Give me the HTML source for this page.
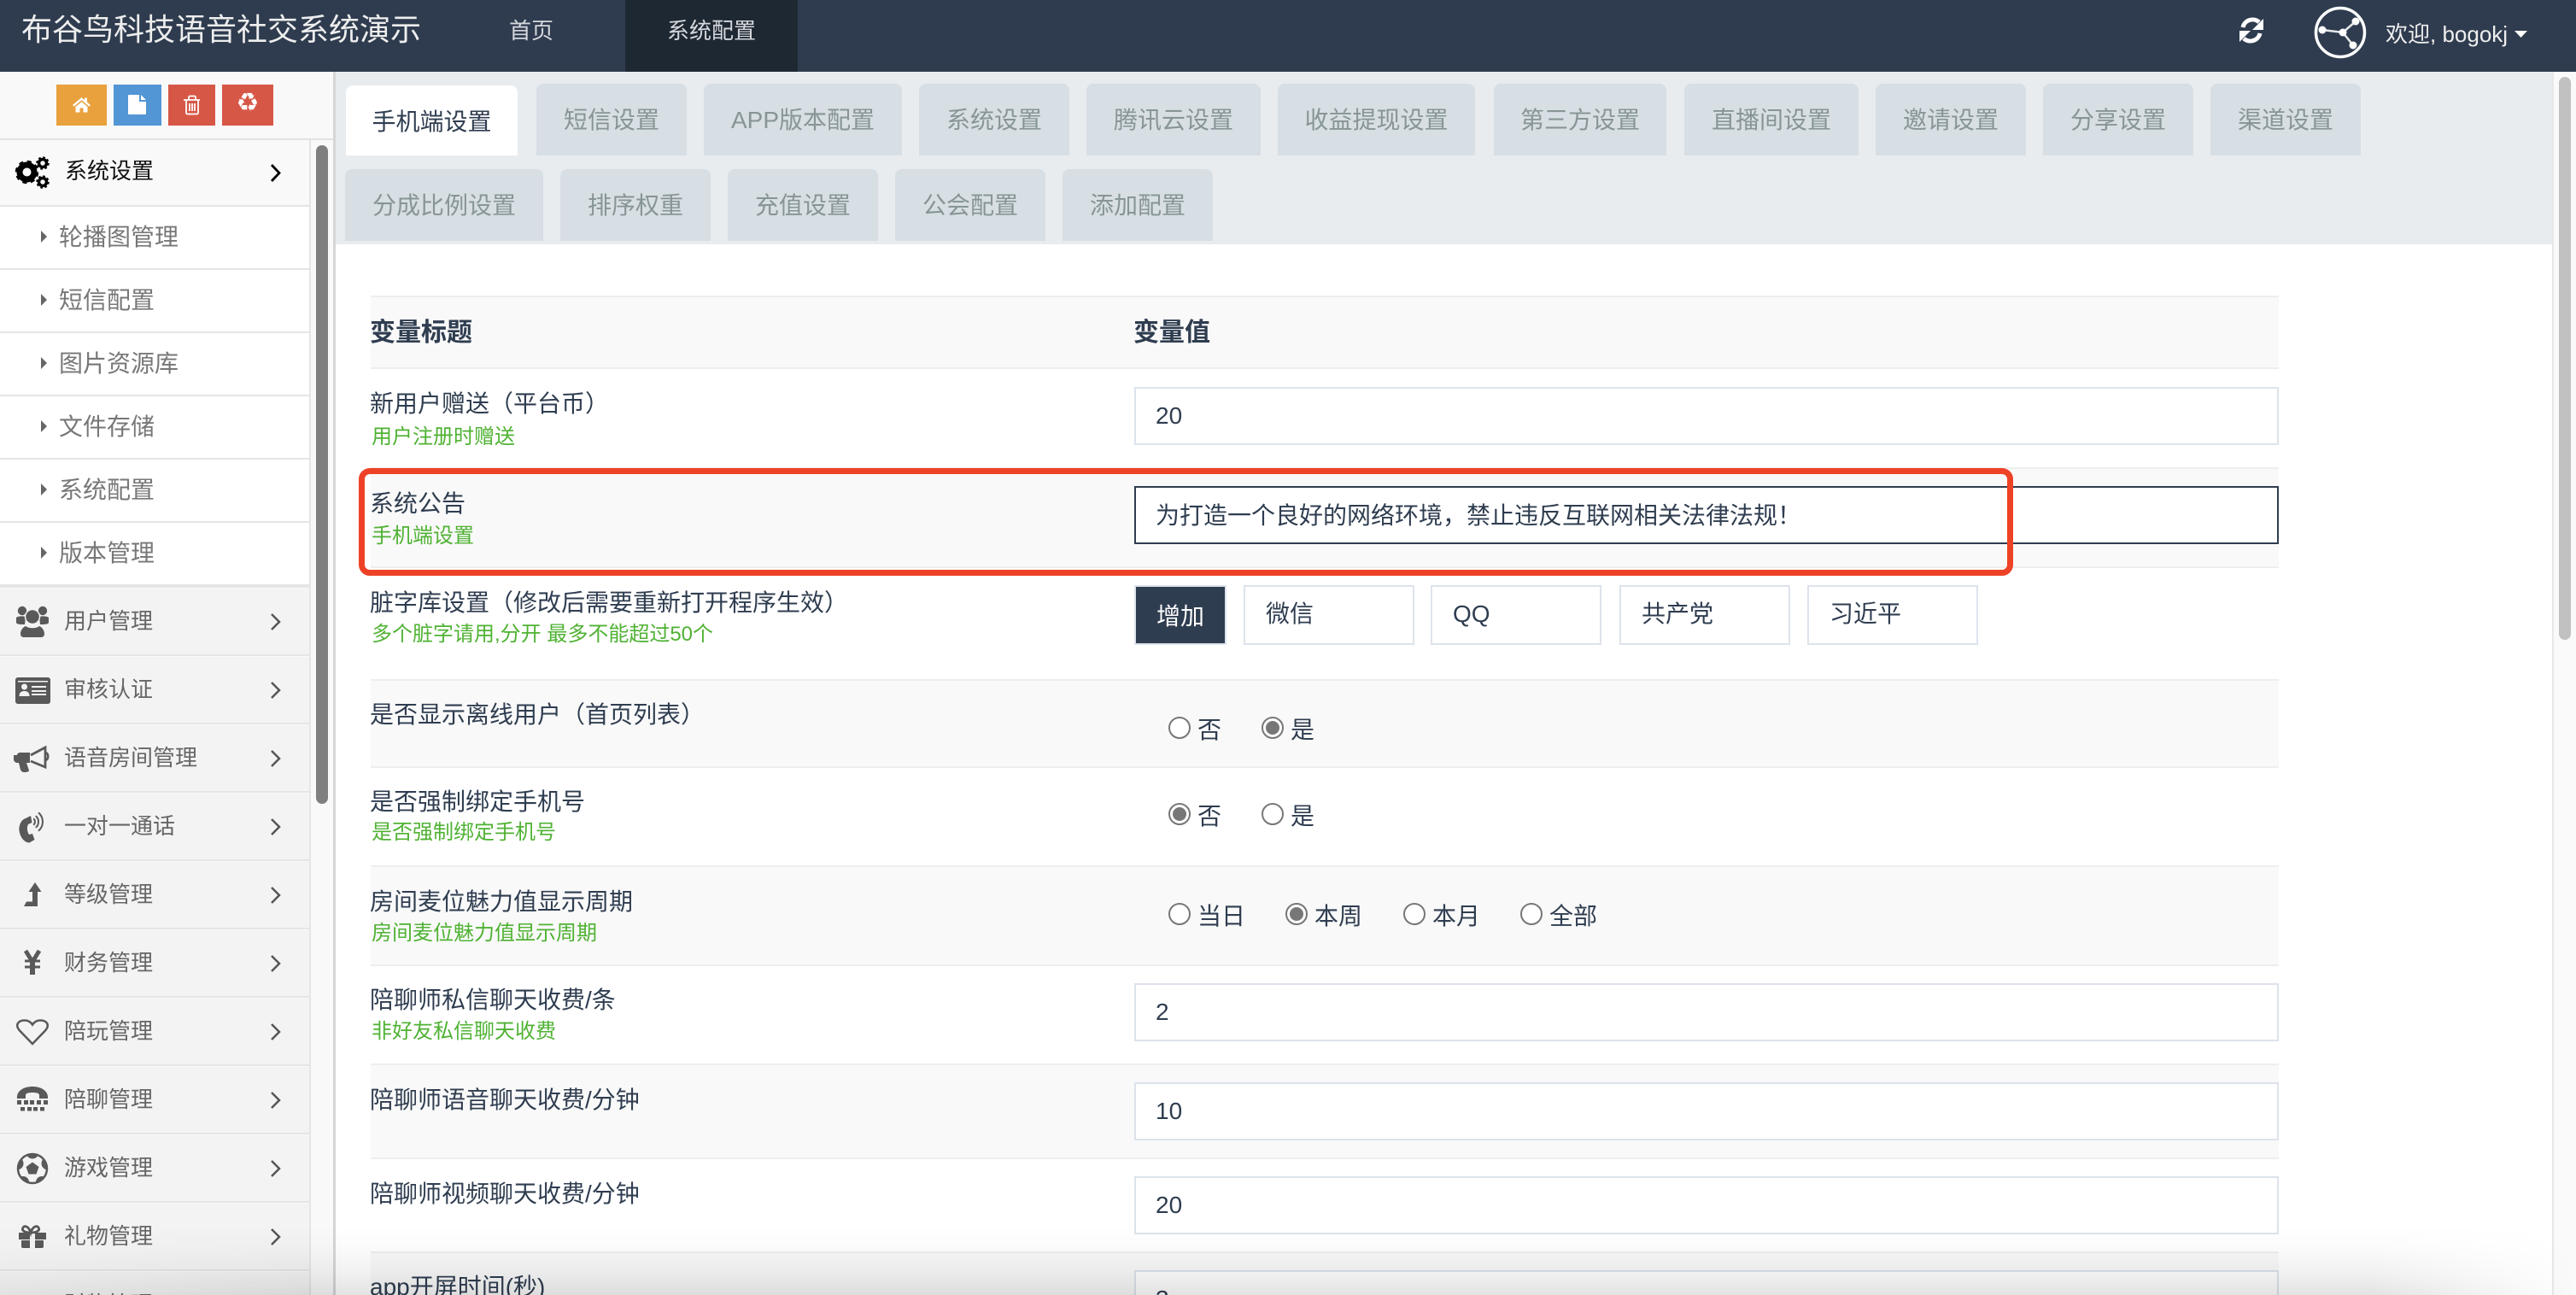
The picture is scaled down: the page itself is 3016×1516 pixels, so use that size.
<!DOCTYPE html>
<html lang="zh"><head><meta charset="utf-8"><title>系统配置</title>
<style>
*{box-sizing:border-box;margin:0;padding:0}
html,body{width:3016px;height:1516px;overflow:hidden;background:#fff}
body{position:relative;font-family:"Liberation Sans","Noto Sans CJK SC",sans-serif;color:#2f3d50;font-size:28px}
.a{position:absolute}
.t{position:absolute;white-space:nowrap;line-height:40px;height:40px}
.tab{position:absolute;height:84px;background:#d7dee4;color:#879595;border-radius:8px 8px 0 0;display:flex;align-items:center;justify-content:center;font-size:28px;padding-bottom:3px}
.row{position:absolute;left:434px;width:2234px;border-top:2px solid #eee}
.z{background:#f9f9f9}
.l{position:absolute;left:433px;white-space:nowrap;font-size:28px;line-height:40px;height:40px;color:#2f3d50;margin-top:2px}
.g{position:absolute;left:435px;white-space:nowrap;font-size:24px;line-height:30px;height:30px;color:#4fb233;margin-top:2px}
.in{position:absolute;left:1328px;width:1340px;height:68px;background:#fff;border:2px solid #dde3ec;line-height:64px;padding-left:23px;font-size:28px;white-space:nowrap;overflow:hidden}
.wd{position:absolute;top:685px;height:70px;width:200px;background:#fff;border:2px solid #dde3ec;line-height:64px;padding-left:24px;font-size:28px}
.rd{position:absolute;width:26px;height:26px;border-radius:50%;border:2px solid #777;background:#fff}
.rd.c::after{content:"";position:absolute;left:3px;top:3px;width:16px;height:16px;border-radius:50%;background:#777}
.m{position:absolute;left:0;width:362px;height:78px;background:#f3f3f3;border-top:1px solid #fafafa}
.m span{position:absolute;left:75px;top:18px;font-size:26px;line-height:40px;color:#666;white-space:nowrap}
.s{position:absolute;left:0;width:362px;height:72px;background:#fff}
.s span{position:absolute;left:69px;top:16px;font-size:28px;line-height:40px;color:#777;white-space:nowrap}
.s i{position:absolute;left:48px;top:28px;border-left:7px solid #666;border-top:7px solid transparent;border-bottom:7px solid transparent}
.ln{position:absolute;left:0;width:362px;height:2px;background:#e5e5e5}
.shade{position:absolute;left:0;top:1436px;width:3016px;height:80px;background:linear-gradient(to bottom,rgba(0,0,0,0),rgba(0,0,0,.015) 30%,rgba(0,0,0,.06) 70%,rgba(0,0,0,.11));-webkit-mask-image:linear-gradient(to right,rgba(0,0,0,.6),#000 12%,#000 92%,transparent);mask-image:linear-gradient(to right,rgba(0,0,0,.6),#000 12%,#000 92%,transparent)}
</style></head><body>

<!-- header -->
<div class="a" style="left:0;top:0;width:3016px;height:84px;background:#2f3c4f"></div>
<div class="a" style="left:732px;top:0;width:202px;height:84px;background:#1e2833"></div>
<div class="t" style="left:25px;top:15px;font-size:36px;line-height:40px;color:#eee">布谷鸟科技语音社交系统演示</div>
<div class="t" style="left:596px;top:16px;font-size:26px;color:#d5d8dc">首页</div>
<div class="t" style="left:781px;top:16px;font-size:26px;color:#d5d8dc">系统配置</div>
<svg class="a" style="left:2600px;top:0" width="416" height="84" viewBox="2600 0 416 84">
 <g fill="none" stroke="#fff" stroke-width="5"><path d="M2626 32a11.500 11.500 0 0 1 19-6"/><path d="M2646 39a11.500 11.500 0 0 1-19 6"/></g>
 <path d="M2650 22v13h-13z" fill="#fff"/><path d="M2622 49v-13h13z" fill="#fff"/>
 <circle cx="2740" cy="38" r="28.500" fill="#2f3c4f" stroke="#fff" stroke-width="3.500"/>
 <g stroke="#e8eaec" stroke-width="2.500" fill="none"><path d="M2719 35l24 3 15-13M2743 38l12 15"/></g>
 <g fill="#fff"><circle cx="2719" cy="35" r="4.500"/><circle cx="2743" cy="38" r="4.500"/><circle cx="2758" cy="25" r="4.500"/><circle cx="2755" cy="53" r="4.500"/></g>
 <path d="M2944 36h15l-7.500 8z" fill="#fff"/>
</svg>
<div class="t" style="left:2793px;top:20px;font-size:26px;color:#eee">欢迎, bogokj</div>

<!-- sidebar -->
<div class="a" style="left:0;top:84px;width:390px;height:1432px;background:#f9f9f9"></div>
<div class="a" style="left:390px;top:84px;width:3px;height:1432px;background:#d5d6d8"></div>
<div class="a" style="left:66px;top:99px;width:59px;height:48px;background:#e8a13c"></div>
<div class="a" style="left:133px;top:99px;width:56px;height:48px;background:#5296d5"></div>
<div class="a" style="left:197px;top:99px;width:55px;height:48px;background:#d75747"></div>
<div class="a" style="left:260px;top:99px;width:60px;height:48px;background:#d75747"></div>
<svg class="a" style="left:60px;top:99px" width="270" height="48" viewBox="60 99 270 48">
 <path d="M95.500 114l-10.500 9 1.500 1.800 9-7.600 9 7.600 1.500-1.800-4-3.400v-5h-3v2.500z" fill="#fff"/>
 <path d="M88.500 125l7-5.800 7 5.800v6.500h-5v-5h-4v5h-5z" fill="#fff"/>
 <path d="M150 112a1 1 0 0 1 1-1h12v8h8v14a1 1 0 0 1-1 1h-19a1 1 0 0 1-1-1z" fill="#fff"/><path d="M165 111l6 6h-6z" fill="#fff"/>
 <g fill="none" stroke="#fff" stroke-width="1.800"><path d="M218 118v14a1.500 1.500 0 0 0 1.500 1.500h11a1.500 1.500 0 0 0 1.500-1.500v-14"/><path d="M215 117h19"/><path d="M221 116.500v-2.500a1.500 1.500 0 0 1 1.500-1.500h5a1.500 1.500 0 0 1 1.500 1.500v2.500"/><path d="M222 121v9M225 121v9M228 121v9"/></g>
</svg>
<div class="t" style="left:275px;top:101px;width:30px;text-align:center;font-family:'DejaVu Sans',sans-serif;font-size:30px;color:#fff">♻</div>
<div class="a" style="left:0;top:162px;width:390px;height:2px;background:#e2e2e2"></div>

<div class="a" style="left:0;top:164px;width:362px;height:76px;background:#f9f9f9"></div>
<div class="t" style="left:76px;top:180px;font-size:26px;color:#111">系统设置</div>
<div class="ln" style="top:240px"></div>
<div class="s" style="top:242px"><i></i><span>轮播图管理</span></div><div class="ln" style="top:314px"></div>
<div class="s" style="top:316px"><i></i><span>短信配置</span></div><div class="ln" style="top:388px"></div>
<div class="s" style="top:390px"><i></i><span>图片资源库</span></div><div class="ln" style="top:462px"></div>
<div class="s" style="top:464px"><i></i><span>文件存储</span></div><div class="ln" style="top:536px"></div>
<div class="s" style="top:538px"><i></i><span>系统配置</span></div><div class="ln" style="top:610px"></div>
<div class="s" style="top:612px"><i></i><span>版本管理</span></div><div class="ln" style="top:684px;height:4px"></div>

<div class="m" style="top:688px"><span>用户管理</span></div><div class="ln" style="top:766px"></div>
<div class="m" style="top:768px"><span>审核认证</span></div><div class="ln" style="top:846px"></div>
<div class="m" style="top:848px"><span>语音房间管理</span></div><div class="ln" style="top:926px"></div>
<div class="m" style="top:928px"><span>一对一通话</span></div><div class="ln" style="top:1006px"></div>
<div class="m" style="top:1008px"><span>等级管理</span></div><div class="ln" style="top:1086px"></div>
<div class="m" style="top:1088px"><span>财务管理</span></div><div class="ln" style="top:1166px"></div>
<div class="m" style="top:1168px"><span>陪玩管理</span></div><div class="ln" style="top:1246px"></div>
<div class="m" style="top:1248px"><span>陪聊管理</span></div><div class="ln" style="top:1326px"></div>
<div class="m" style="top:1328px"><span>游戏管理</span></div><div class="ln" style="top:1406px"></div>
<div class="m" style="top:1408px"><span>礼物管理</span></div><div class="ln" style="top:1486px"></div>
<div class="m" style="top:1488px"><span>财物管理</span></div>
<div class="a" style="left:362px;top:164px;width:2px;height:1352px;background:#e5e5e5"></div>
<div class="a" style="left:370px;top:170px;width:14px;height:771px;background:#7f7f7f;border-radius:7px"></div>

<svg class="a" style="left:0;top:164px" width="362" height="1352" viewBox="0 164 362 1352">
 <defs><clipPath id="b"><circle cx="38" cy="1368" r="18"/></clipPath></defs>
 <!-- gears -->
 <g fill="none" stroke="#000">
  <circle cx="31.500" cy="201.500" r="8.500" stroke-width="7"/><circle cx="31.500" cy="201.500" r="12" stroke-width="3.500" stroke-dasharray="5 4.400"/>
  <circle cx="50" cy="191" r="4.500" stroke-width="3.500"/><circle cx="50" cy="191" r="6.500" stroke-width="2.500" stroke-dasharray="2.600 2.500"/>
  <circle cx="50" cy="213" r="4.500" stroke-width="3.500"/><circle cx="50" cy="213" r="6.500" stroke-width="2.500" stroke-dasharray="2.600 2.500"/>
 </g>
 <path d="M318 193l9 9.500-9 9.500" fill="none" stroke="#000" stroke-width="2.800"/>
 <!-- chevrons -->
 <g fill="none" stroke="#555" stroke-width="2.500">
  <path d="M318 719l9 9-9 9M318 799l9 9-9 9M318 879l9 9-9 9M318 959l9 9-9 9M318 1039l9 9-9 9M318 1119l9 9-9 9M318 1199l9 9-9 9M318 1279l9 9-9 9M318 1359l9 9-9 9M318 1439l9 9-9 9"/>
 </g>
 <g fill="#595959">
  <!-- users -->
  <circle cx="26" cy="715" r="5.200"/><circle cx="50" cy="715" r="5.200"/>
  <path d="M19 723c2-2 8-2 11-1l-1 9c-5 0-10 0-10-2.500zM57 723c-2-2-8-2-11-1l1 9c5 0 10 0 10-2.500z"/>
  <circle cx="38" cy="722" r="8.500" stroke="#f3f3f3" stroke-width="1.500"/>
  <path d="M30 733c4 3 12 3 16 0 3 1 6 5 6 9 0 3-2 4-4 4H28c-2 0-4-1-4-4 0-4 3-8 6-9z"/>
  <!-- id card -->
  <rect x="18" y="793" width="41" height="31" rx="3"/>
  <!-- bullhorn -->
  <path d="M20 884c0-2 2-3 4-3h11v12h-4l3 9c0 1-2 2-5 2s-4-1-5-3l-2-8h-2c-2 0-4-2-4-4v-5z"/>
  <!-- phone handset -->
  <path d="M30 958l6-3 1.500 8-4.500 2c-2 4-1 9 1 12l4-1 2.500 7-6 3.500c-8 0-13-11-12-18 1-6 4-9.500 7.500-10.500z"/>
  <!-- level up -->
  <path d="M41 1033l7.500 11h-4.500v17H28l3-5.500h7V1044h-4.500z"/>
  <!-- tty -->
  <path d="M20 1286c-1-9 8-14 18-14s19 5 18 14h-10v-4c0-2-3-3-8-3s-8 1-8 3v4z"/>
  <path d="M20 1288h5v5h-5zM28 1288h5v5h-5zM35 1288h5v5h-5zM43 1288h5v5h-5zM51 1288h5v5h-5zM24 1296h5v4.500h-5zM32 1296h5v4.500h-5zM39 1296h5v4.500h-5zM47 1296h5v4.500h-5z"/>
  <!-- gift -->
  <path d="M22 1443h13v8H22zM41 1443h13v8H41zM25 1452h10v9h-8a2 2 0 0 1-2-2zM41 1452h10v7a2 2 0 0 1-2 2h-8z"/>
 </g>
 <!-- soccer -->
 <circle cx="38" cy="1368" r="17" fill="#f3f3f3" stroke="#595959" stroke-width="2.500"/>
 <g clip-path="url(#b)" fill="#595959">
  <circle cx="38" cy="1349" r="7.500"/><circle cx="56" cy="1362" r="7.500"/><circle cx="49" cy="1384" r="7"/><circle cx="27" cy="1384" r="7"/><circle cx="20" cy="1362" r="7.500"/>
 </g>
 <path d="M38 1360.500l7.500 5.500-3 8.500h-9l-3-8.500z" fill="#595959"/>
 <g fill="#f3f3f3">
  <rect x="21" y="797" width="35" height="1.500"/><circle cx="28.500" cy="804" r="3.500"/><path d="M22.500 815c0-4 2-6 6-6s6 2 6 6z"/>
  <rect x="37" y="803" width="17" height="2"/><rect x="37" y="808" width="17" height="2"/><rect x="37" y="812" width="17" height="2"/>
 </g>
 <g fill="none" stroke="#595959">
  <path d="M36 884l17-9v23l-17-7" stroke-width="2.800"/><path d="M54 881c3 2 3 7 0 9" stroke-width="2.500"/>
  <path d="M39.200 958.200a5 5 0 0 1 0 7.600M41.800 955.100a9 9 0 0 1 0 13.800M45 951.300a14 14 0 0 1 0 21.400" stroke-width="2"/>
  <path d="M30 1113l8 13 8-13" stroke-width="5"/><path d="M38 1125v16" stroke-width="6"/><path d="M29 1125h18M29 1132h18" stroke-width="3"/>
  <path d="M38 1222L23.500 1207C17 1200 21 1194.500 29 1194.500c4 0 7 2 9 5 2-3 5-5 9-5 8 0 12 5.500 5.500 12.500z" stroke-width="2.500"/>
  <path d="M36 1443c-8 0-11-3-9-6s7-1 9 6c2-7 7-9 9-6s-1 6-9 6z" stroke-width="2.800"/>
 </g>
</svg>

<!-- tab bar -->
<div class="a" style="left:393px;top:84px;width:2595px;height:202px;background:#e8ecef"></div>
<div class="tab" style="left:405px;top:100px;width:201px;height:82px;background:#fff;color:#2f3d50;padding-bottom:1px">手机端设置</div>
<div class="tab" style="left:628px;top:98px;width:176px">短信设置</div>
<div class="tab" style="left:824px;top:98px;width:232px">APP版本配置</div>
<div class="tab" style="left:1076px;top:98px;width:176px">系统设置</div>
<div class="tab" style="left:1272px;top:98px;width:204px">腾讯云设置</div>
<div class="tab" style="left:1496px;top:98px;width:231px">收益提现设置</div>
<div class="tab" style="left:1749px;top:98px;width:202px">第三方设置</div>
<div class="tab" style="left:1972px;top:98px;width:204px">直播间设置</div>
<div class="tab" style="left:2196px;top:98px;width:176px">邀请设置</div>
<div class="tab" style="left:2392px;top:98px;width:176px">分享设置</div>
<div class="tab" style="left:2588px;top:98px;width:176px">渠道设置</div>
<div class="tab" style="left:404px;top:198px;width:232px">分成比例设置</div>
<div class="tab" style="left:656px;top:198px;width:176px">排序权重</div>
<div class="tab" style="left:852px;top:198px;width:176px">充值设置</div>
<div class="tab" style="left:1048px;top:198px;width:176px">公会配置</div>
<div class="tab" style="left:1244px;top:198px;width:176px">添加配置</div>

<!-- content scrollbar -->
<div class="a" style="left:2988px;top:84px;width:28px;height:1432px;background:#fafafa;border-left:2px solid #e8e8e8"></div>
<div class="a" style="left:2996px;top:90px;width:14px;height:659px;background:#c1c1c1;border-radius:7px"></div>

<!-- table rows -->
<div class="row z" style="top:346px;height:84px"></div>
<div class="row" style="top:430px;height:117px"></div>
<div class="row z" style="top:547px;height:116px"></div>
<div class="row" style="top:663px;height:132px"></div>
<div class="row z" style="top:795px;height:102px"></div>
<div class="row" style="top:897px;height:116px"></div>
<div class="row z" style="top:1013px;height:116px"></div>
<div class="row" style="top:1129px;height:116px"></div>
<div class="row z" style="top:1245px;height:110px"></div>
<div class="row" style="top:1355px;height:110px"></div>
<div class="row z" style="top:1465px;height:51px"></div>

<div class="l" style="top:368px;font-size:30px;font-weight:bold">变量标题</div>
<div class="l" style="left:1327px;top:368px;font-size:30px;font-weight:bold">变量值</div>

<div class="l" style="top:451px">新用户赠送（平台币）</div><div class="g" style="top:495px">用户注册时赠送</div>
<div class="in" style="top:453px">20</div>

<div class="l" style="top:568px">系统公告</div><div class="g" style="top:611px">手机端设置</div>
<div class="in" style="top:569px;border-color:#2f3d50;line-height:66px">为打造一个良好的网络环境，禁止违反互联网相关法律法规！</div>

<div class="l" style="top:684px">脏字库设置（修改后需要重新打开程序生效）</div><div class="g" style="top:726px">多个脏字请用,分开 最多不能超过50个</div>
<div class="a" style="left:1328px;top:685px;width:108px;height:70px;background:#2f3d50;border:2px solid #dde3ec;color:#fff;line-height:70px;text-align:center;font-size:28px">增加</div>
<div class="wd" style="left:1456px">微信</div>
<div class="wd" style="left:1675px">QQ</div>
<div class="wd" style="left:1896px">共产党</div>
<div class="wd" style="left:2116px">习近平</div>

<div class="l" style="top:815px">是否显示离线用户（首页列表）</div>
<div class="rd" style="left:1368px;top:839px"></div><div class="t" style="left:1402px;top:835px">否</div>
<div class="rd c" style="left:1477px;top:839px"></div><div class="t" style="left:1511px;top:835px">是</div>

<div class="l" style="top:917px">是否强制绑定手机号</div><div class="g" style="top:958px">是否强制绑定手机号</div>
<div class="rd c" style="left:1368px;top:940px"></div><div class="t" style="left:1402px;top:936px">否</div>
<div class="rd" style="left:1477px;top:940px"></div><div class="t" style="left:1511px;top:936px">是</div>

<div class="l" style="top:1034px">房间麦位魅力值显示周期</div><div class="g" style="top:1076px">房间麦位魅力值显示周期</div>
<div class="rd" style="left:1368px;top:1057px"></div><div class="t" style="left:1402px;top:1053px">当日</div>
<div class="rd c" style="left:1505px;top:1057px"></div><div class="t" style="left:1539px;top:1053px">本周</div>
<div class="rd" style="left:1643px;top:1057px"></div><div class="t" style="left:1677px;top:1053px">本月</div>
<div class="rd" style="left:1780px;top:1057px"></div><div class="t" style="left:1814px;top:1053px">全部</div>

<div class="l" style="top:1149px">陪聊师私信聊天收费/条</div><div class="g" style="top:1191px">非好友私信聊天收费</div>
<div class="in" style="top:1151px">2</div>
<div class="l" style="top:1266px">陪聊师语音聊天收费/分钟</div>
<div class="in" style="top:1267px">10</div>
<div class="l" style="top:1376px">陪聊师视频聊天收费/分钟</div>
<div class="in" style="top:1377px">20</div>
<div class="l" style="top:1485px">app开屏时间(秒)</div>
<div class="in" style="top:1487px">3</div>

<!-- red annotation -->
<div class="a" style="left:420px;top:548px;width:1937px;height:126px;border:7px solid #ee4226;border-radius:13px"></div>

<!-- bottom shade -->
<div class="shade"></div>
</body></html>
